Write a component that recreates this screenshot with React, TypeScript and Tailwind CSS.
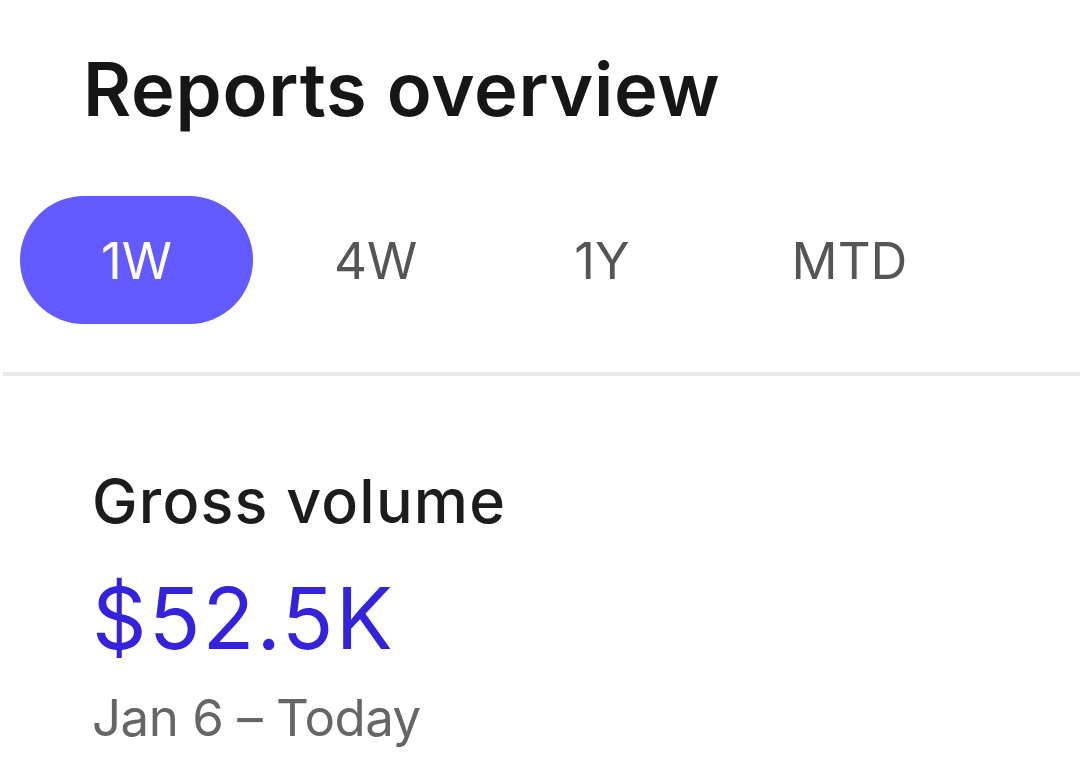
const tabs = [
  { label: '1W', pad: 'px-[81px]' },
  { label: '4W', pad: 'pl-[81px] pr-[76px]' },
  { label: '1Y', pad: 'px-[81px]' },
  { label: 'MTD', pad: 'px-[81px]' },
]

export default function App() {
  const active = '1W'
  return (
    <div className="min-h-[769px] w-[1080px] overflow-hidden bg-white font-['Inter',sans-serif]">
      <h1 className="pl-[83px] pt-[52px] text-[74px] font-semibold leading-none tracking-[0.01em] text-[#161616]">
        Reports overview
      </h1>
      <div className="mt-[70px] flex items-center pl-[20px] whitespace-nowrap">
        {tabs.map((t) => (
          <button
            key={t.label}
            className={
              t.label === active
                ? `flex h-[128px] items-center rounded-full bg-[#635bff] ${t.pad} text-[51px] leading-none text-white`
                : `flex h-[128px] items-center ${t.pad} text-[51px] leading-none text-[#555555]`
            }
          >
            {t.label}
          </button>
        ))}
      </div>
      <div className="mt-[48px] ml-[3px] h-[4px] bg-[#e8e8e8]" />
      <div className="pl-[92px] pt-[95px]">
        <h2 className="text-[61px] font-medium leading-none tracking-[0.02em] text-[#1c1c1c]">
          Gross volume
        </h2>
        <p className="mt-[44px] text-[85px] leading-none tracking-[0.025em] text-[#3323dc]">$52.5K</p>
        <p className="mt-[31px] text-[51px] leading-none tracking-[-0.01em] text-[#666666]">Jan 6 – Today</p>
      </div>
    </div>
  )
}
